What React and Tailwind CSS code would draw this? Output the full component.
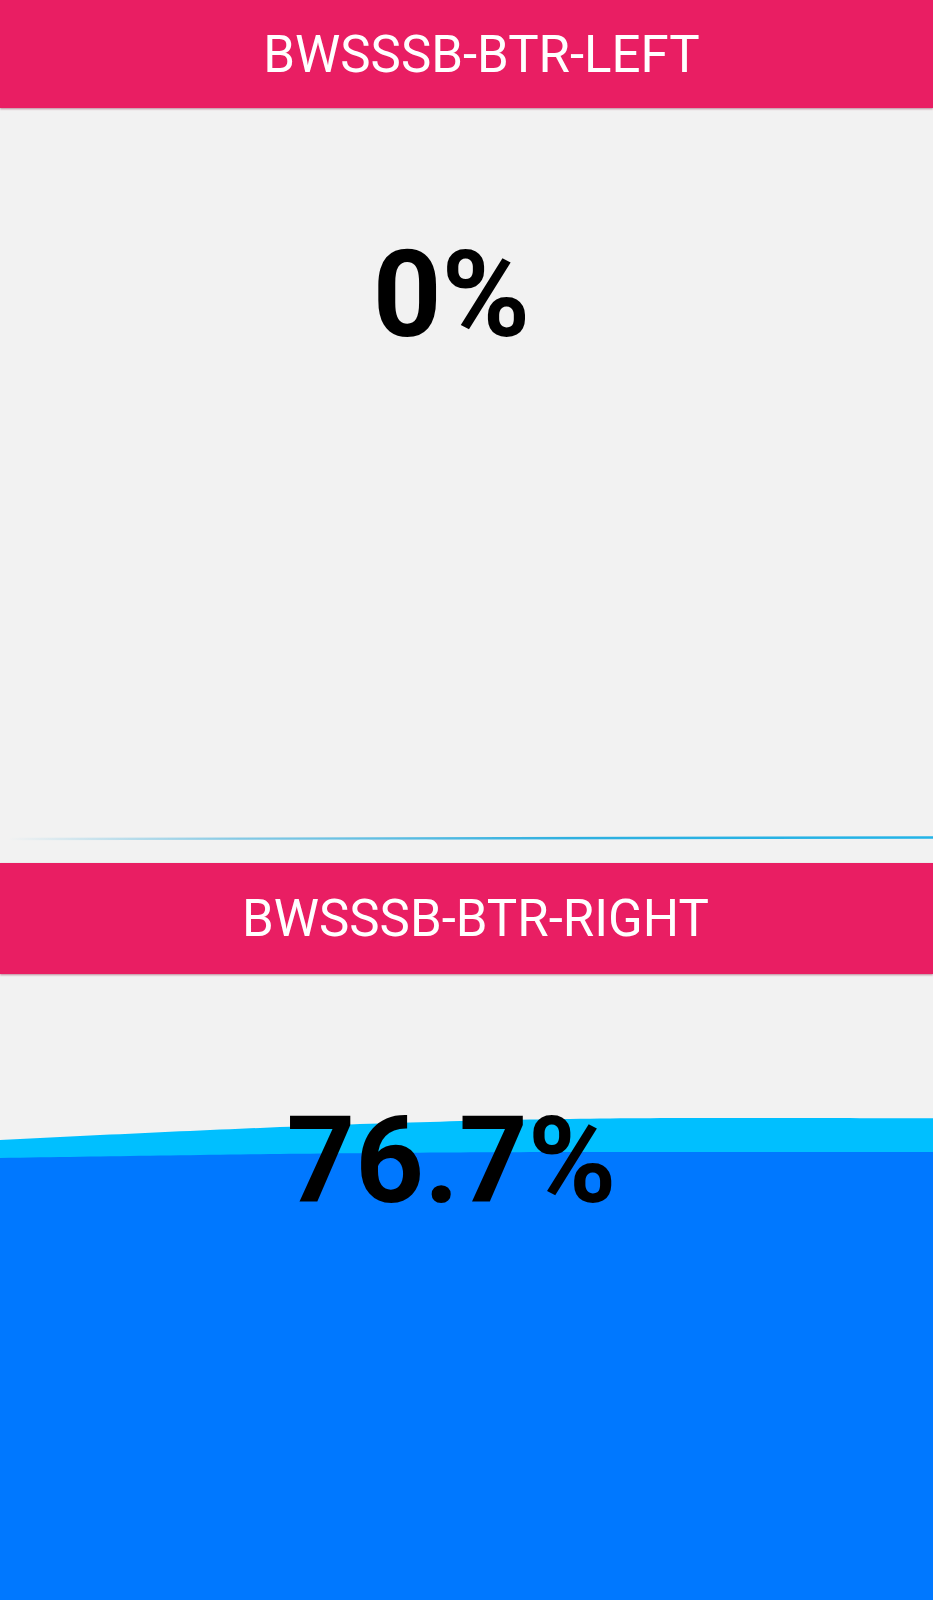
import React from "react";

function lightPath(w, top) {
  let d = `M0 ${top + 22}`;
  for (let x = 0; x <= w + 20; x += 10) {
    const a = (Math.PI / 2) * (x / 700);
    const y = top + 22 * (1 - Math.sin(Math.min(a, Math.PI / 2) + Math.max(0, a - Math.PI / 2) * 0.3));
    d += ` L${x} ${y.toFixed(2)}`;
  }
  d += ` L${w + 20} 2000 L0 2000 Z`;
  return d;
}

function darkPath(w, top) {
  let d = `M0 ${top + 6}`;
  for (let x = 0; x <= w + 20; x += 10) {
    const a = Math.min((Math.PI / 2) * (x / 600), Math.PI / 2);
    const y = top + 6 * (1 - Math.sin(a));
    d += ` L${x} ${y.toFixed(2)}`;
  }
  d += ` L${w + 20} 2000 L0 2000 Z`;
  return d;
}

const font = { fontFamily: "Roboto, 'Liberation Sans', sans-serif" };

function Header({ title, shift }) {
  return (
    <div
      className={`w-full flex items-center justify-center bg-[#e91e63] text-white text-[51px] leading-none shadow-[0_1px_2px_rgba(120,0,40,0.45)] relative z-10 ${shift}`}
      style={font}
    >
      {title}
    </div>
  );
}

export default function App() {
  return (
    <div className="w-full h-[1600px] overflow-hidden bg-[#f2f2f2]" style={font}>
      <div className="h-[108px] flex">
        <Header title="BWSSSB-BTR-LEFT" shift="pl-[30px]" />
      </div>
      <div className="relative h-[755px] bg-[#f2f2f2] overflow-hidden">
        <svg className="absolute inset-0 w-full h-full" viewBox="0 0 933 755" preserveAspectRatio="none">
          <defs>
            <linearGradient id="lg1" x1="0" x2="1" y1="0" y2="0">
              <stop offset="0" stopColor="#3aaedc" stopOpacity="0" />
              <stop offset="0.25" stopColor="#3aaedc" stopOpacity="0.6" />
              <stop offset="0.6" stopColor="#2fb0e0" stopOpacity="1" />
              <stop offset="1" stopColor="#22b4e8" stopOpacity="1" />
            </linearGradient>
          </defs>
          <path d="M8 731 Q 400 730 940 729.5" stroke="url(#lg1)" strokeWidth="2.4" fill="none" />
        </svg>
        <div className="relative flex justify-center pt-[127px] pr-[30px]">
          <span className="text-[120px] font-bold leading-none text-black">0%</span>
        </div>
      </div>
      <div className="h-[111px] flex">
        <Header title="BWSSSB-BTR-RIGHT" shift="pl-[18px]" />
      </div>
      <div className="relative h-[626px] bg-[#f2f2f2] overflow-hidden">
        <svg className="absolute inset-0 w-full h-full" viewBox="0 0 933 626" preserveAspectRatio="none">
          <path d={lightPath(933, 144)} fill="#00bfff" />
          <path d={darkPath(933, 178)} fill="#0078ff" />
        </svg>
        <div className="relative flex justify-center pt-[127px] pr-[30px]">
          <span className="text-[120px] font-bold leading-none text-black">76.7%</span>
        </div>
      </div>
    </div>
  );
}
